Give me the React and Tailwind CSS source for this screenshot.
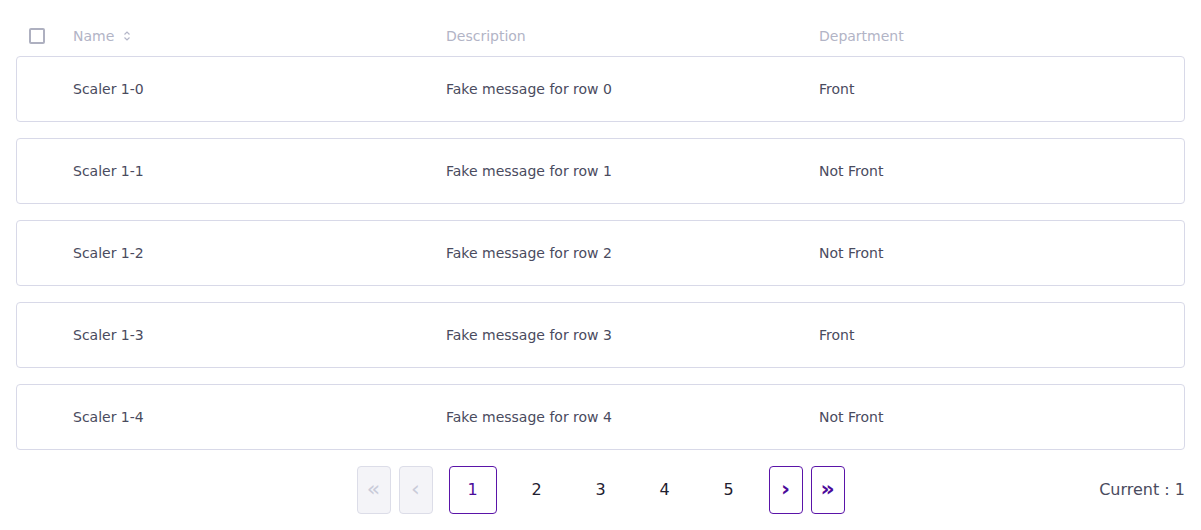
import React from 'react';

const rows = [
  { name: 'Scaler 1-0', desc: 'Fake message for row 0', dept: 'Front' },
  { name: 'Scaler 1-1', desc: 'Fake message for row 1', dept: 'Not Front' },
  { name: 'Scaler 1-2', desc: 'Fake message for row 2', dept: 'Not Front' },
  { name: 'Scaler 1-3', desc: 'Fake message for row 3', dept: 'Front' },
  { name: 'Scaler 1-4', desc: 'Fake message for row 4', dept: 'Not Front' },
];

const cols = 'grid grid-cols-[57px_373px_373px_1fr] items-center';

const SortIcon = () => (
  <svg width="8" height="12" viewBox="0 0 8 12" className="ml-[9px]">
    <path d="M1.5 4.5 L4 2 L6.5 4.5" fill="none" stroke="#b4b6c8" strokeWidth="1.2" />
    <path d="M1.5 7.5 L4 10 L6.5 7.5" fill="none" stroke="#b4b6c8" strokeWidth="1.2" />
  </svg>
);

const NavBtn = ({ children, disabled }) => (
  <button
    className={
      disabled
        ? 'w-[34px] h-[48px] rounded-[4px] border border-[#dcdde8] bg-[#f4f4f8] text-[#c9cbd9] flex items-center justify-center text-[22px] leading-none pb-[2px]'
        : 'w-[34px] h-[48px] rounded-[4px] border border-[#5a14a8] bg-white text-[#4b0a9a] font-bold flex items-center justify-center text-[22px] leading-none pb-[2px]'
    }
  >
    {children}
  </button>
);

const App = () => {
  return (
    <div className="w-[1201px] h-[530px] bg-white px-4 text-[14px]" style={{ fontFamily: '"DejaVu Sans", sans-serif' }}>
      <div className={`${cols} h-[56px] pt-4 text-[#b2b4c6]`}>
        <div className="pl-[13px] flex items-center">
          <span className="w-4 h-4 border-2 border-[#aeb0c0] rounded-[2px] bg-white" />
        </div>
        <div className="flex items-center">
          Name
          <SortIcon />
        </div>
        <div>Description</div>
        <div>Department</div>
      </div>

      <div className="flex flex-col gap-4">
        {rows.map((r) => (
          <div key={r.name} className={`${cols} h-[66px] border border-[#d8d9e8] rounded-[4px] text-[#4a4b5e]`}>
            <div />
            <div className="-ml-px">{r.name}</div>
            <div className="-ml-px">{r.desc}</div>
            <div className="-ml-px">{r.dept}</div>
          </div>
        ))}
      </div>

      <div className="relative flex items-center justify-center mt-4 h-[48px] text-[16px]">
        <div className="flex items-center gap-2">
          <NavBtn disabled>«</NavBtn>
          <NavBtn disabled>‹</NavBtn>
          <div className="flex items-center gap-4 mx-2">
            <button className="w-12 h-12 rounded-[4px] border border-[#5a14a8] text-[#4b0a9a]">1</button>
            {[2, 3, 4, 5].map((n) => (
              <button key={n} className="w-12 h-12 rounded-[4px] text-[#1f2030]">{n}</button>
            ))}
          </div>
          <NavBtn>›</NavBtn>
          <NavBtn>»</NavBtn>
        </div>
        <div className="absolute right-0 text-[#4a4b5e]">Current : 1</div>
      </div>
    </div>
  );
};

export default App;
